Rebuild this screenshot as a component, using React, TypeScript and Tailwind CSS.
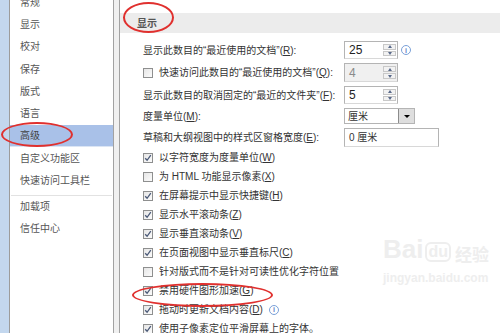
import React from 'react'

const navItems = ['常规', '显示', '校对', '保存', '版式', '语言', '高级', '自定义功能区', '快速访问工具栏']

function Key({ k }: { k: string }) {
  return (
    <span>
      (<span className="underline underline-offset-1">{k}</span>)
    </span>
  )
}

function Checkbox({ checked }: { checked?: boolean }) {
  return (
    <span className="flex h-[10px] w-[10px] shrink-0 items-center justify-center border border-[#8e8f8f] bg-gradient-to-br from-[#e6e6e6] to-[#fbfbfb]">
      {checked && (
        <svg width="8" height="8" viewBox="0 0 8 8">
          <path d="M1.2 4.2 L3.1 6.3 L6.8 1.2" fill="none" stroke="#4b5a78" strokeWidth="1.3" />
        </svg>
      )}
    </span>
  )
}

function Spinner() {
  return (
    <div className="flex h-full w-[14px] flex-col gap-px py-[2px] pr-[1px]">
      <div className="flex flex-1 items-center justify-center border border-[#c8c8c8] bg-[#f2f2f2]">
        <span className="h-0 w-0 border-x-[2.5px] border-b-[3px] border-x-transparent border-b-[#5a6a8a]" />
      </div>
      <div className="flex flex-1 items-center justify-center border border-[#c8c8c8] bg-[#f2f2f2]">
        <span className="h-0 w-0 border-x-[2.5px] border-t-[3px] border-x-transparent border-t-[#5a6a8a]" />
      </div>
    </div>
  )
}

function NumInput({ value, disabled }: { value: string; disabled?: boolean }) {
  return (
    <div
      className={`flex h-full w-[54px] items-center border border-[#b4b4b4] border-b-[#d8d8d8] ${
        disabled ? 'bg-[#f0f0f0] text-[#8a8a8a]' : 'bg-white text-[#222]'
      }`}
    >
      <span className="flex-1 pl-[4px] text-[12px]">{value}</span>
      <Spinner />
    </div>
  )
}

function Info() {
  return (
    <span className="flex h-[10px] w-[10px] items-center justify-center rounded-full border border-[#7aa0d8] text-[7px] font-bold leading-none text-[#5b86c8]">
      i
    </span>
  )
}

const checks: { label: React.ReactNode; checked: boolean; info?: boolean }[] = [
  { label: <>以字符宽度为度量单位<Key k="W" /></>, checked: true },
  { label: <>为 HTML 功能显示像素<Key k="X" /></>, checked: false },
  { label: <>在屏幕提示中显示快捷键<Key k="H" /></>, checked: true },
  { label: <>显示水平滚动条<Key k="Z" /></>, checked: true },
  { label: <>显示垂直滚动条<Key k="V" /></>, checked: true },
  { label: <>在页面视图中显示垂直标尺<Key k="C" /></>, checked: true },
  { label: <>针对版式而不是针对可读性优化字符位置</>, checked: false },
  { label: <>禁用硬件图形加速<Key k="G" /></>, checked: true },
  { label: <>拖动时更新文档内容<Key k="D" /></>, checked: true, info: true },
  { label: <>使用子像素定位平滑屏幕上的字体。</>, checked: true },
]

export default function App() {
  return (
    <div
      className="relative flex h-[333px] w-[500px] overflow-hidden bg-white text-[10px] text-[#333]"
      style={{ fontFamily: '"Liberation Sans", "Noto Sans CJK SC", sans-serif' }}
    >
      {/* left frame */}
      <div className="w-[9px] shrink-0 bg-[#c3d7ee]" />
      <div className="w-px shrink-0 bg-[#9c9c9c]" />

      {/* category list */}
      <div className="w-[103px] shrink-0 -mt-[9px] text-[#555]">
        {navItems.map((item) => (
          <div
            key={item}
            className={`flex h-[22.3px] items-center pl-[10px] ${
              item === '高级' ? 'border-b border-b-[#dbe5f4] bg-[#a9c1e8] text-[#444]' : ''
            }`}
          >
            {item}
          </div>
        ))}
        <div className="mx-[1px] mt-[3px] h-px bg-[#e2e2e2]" />
        <div className="flex h-[22px] items-center pl-[10px]">加载项</div>
        <div className="flex h-[22px] items-center pl-[10px]">信任中心</div>
      </div>

      {/* splitter */}
      <div className="w-px shrink-0 bg-[#a2a2a2]" />
      <div className="w-[5px] shrink-0 bg-[#f0f0f0]" />
      <div className="w-px shrink-0 bg-[#a2a2a2]" />

      {/* options */}
      <div className="flex-1 pt-[13px]">
        <div className="flex h-[20px] items-center bg-[#ececec] pl-[17px] font-bold text-[#555]">显示</div>

        <div className="mt-[8px] pl-[23px]">
          <div className="flex h-[22px]">
            <div className="flex h-[18px] w-[201px] items-center whitespace-nowrap">
              显示此数目的“最近使用的文档”<Key k="R" />:
            </div>
            <div className="h-[18px]">
              <NumInput value="25" />
            </div>
            <div className="ml-[3px] flex h-[18px] items-center">
              <Info />
            </div>
          </div>

          <div className="flex h-[23px]">
            <div className="flex h-[19px] w-[201px] items-center gap-[6px] whitespace-nowrap">
              <Checkbox />
              <span>快速访问此数目的“最近使用的文档”<Key k="Q" />:</span>
            </div>
            <div className="h-[19px]">
              <NumInput value="4" disabled />
            </div>
          </div>

          <div className="flex h-[22px]">
            <div className="flex h-[18px] w-[201px] items-center whitespace-nowrap">
              显示此数目的取消固定的“最近的文件夹”<Key k="F" />:
            </div>
            <div className="h-[18px]">
              <NumInput value="5" />
            </div>
          </div>

          <div className="flex h-[20px]">
            <div className="flex h-[16px] w-[201px] items-center whitespace-nowrap">
              度量单位<Key k="M" />:
            </div>
            <div className="flex h-[16px] w-[71px] items-center border border-[#b4b4b4] bg-white">
              <span className="flex-1 pl-[3px] text-[#333]">厘米</span>
              <span className="flex h-full w-[16px] items-center justify-center border-l border-[#8c8c8c] bg-[#dedede]">
                <span className="h-0 w-0 border-x-[3px] border-t-[3px] border-x-transparent border-t-black" />
              </span>
            </div>
          </div>

          <div className="flex h-[20px]">
            <div className="flex h-[19px] w-[201px] items-center whitespace-nowrap">
              草稿和大纲视图中的样式区窗格宽度<Key k="E" />:
            </div>
            <div className="flex h-[19px] w-[95px] items-center border border-[#b4b4b4] border-b-[#d8d8d8] bg-white pl-[4px]">
              0 厘米
            </div>
          </div>

          {checks.map((c, i) => (
            <div key={i} className="flex h-[19px] items-center gap-[6px] whitespace-nowrap">
              <Checkbox checked={c.checked} />
              <span>{c.label}</span>
              {c.info && <Info />}
            </div>
          ))}
        </div>
      </div>

      {/* red annotation ellipses */}
      <div className="absolute left-[123px] top-[2px] h-[31px] w-[51px] rounded-[50%] border-2 border-[#e0302e]" />
      <div className="absolute left-[1px] top-[122px] h-[25px] w-[72px] rounded-[50%] border-2 border-[#e0302e]" />
      <div className="absolute left-[132px] top-[283px] h-[24px] w-[141px] rounded-[50%] border-2 border-[#e0302e]" />

      {/* watermark */}
      <div className="pointer-events-none absolute left-[383px] top-[236px] flex flex-col items-start text-[#eeeeee]">
        <div className="flex items-end gap-[2px]">
          <span className="text-[26px] font-bold leading-none">Bai</span>
          <span className="rounded-[6px] border-2 border-[#eeeeee] px-[1px] text-[16px] font-bold leading-none">du</span>
          <span className="ml-[2px] text-[17px] font-bold leading-none" style={{ fontFamily: '"Noto Sans CJK SC", sans-serif' }}>
            经验
          </span>
        </div>
        <span className="mt-[10px] text-[12px] font-bold leading-none">jingyan.baidu.com</span>
      </div>
    </div>
  )
}
